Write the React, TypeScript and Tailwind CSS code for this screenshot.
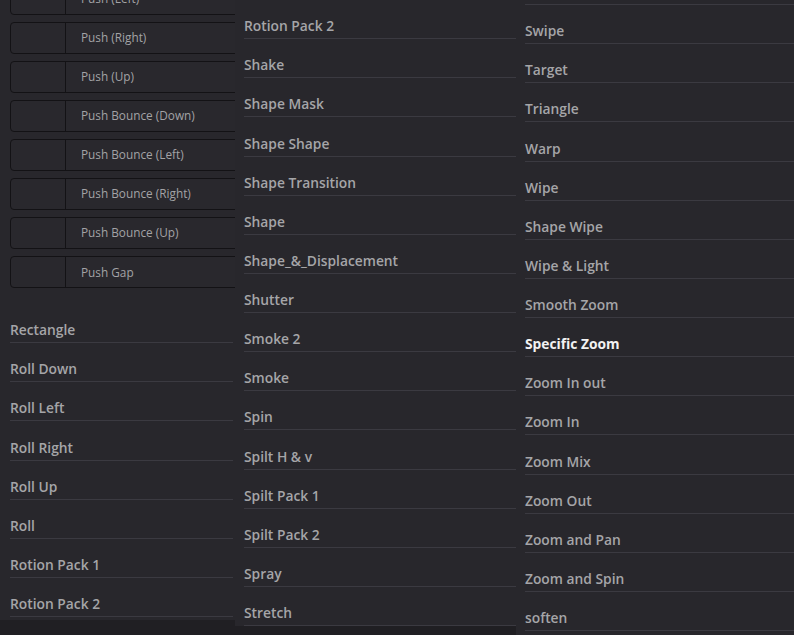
import React from 'react';

const pushItems = [
  'Push (Left)',
  'Push (Right)',
  'Push (Up)',
  'Push Bounce (Down)',
  'Push Bounce (Left)',
  'Push Bounce (Right)',
  'Push Bounce (Up)',
  'Push Gap',
];

const col1 = ['Rectangle', 'Roll Down', 'Roll Left', 'Roll Right', 'Roll Up', 'Roll', 'Rotion Pack 1', 'Rotion Pack 2'];

const col2 = [
  'Rotion Pack 2',
  'Shake',
  'Shape Mask',
  'Shape Shape',
  'Shape Transition',
  'Shape',
  'Shape_&_Displacement',
  'Shutter',
  'Smoke 2',
  'Smoke',
  'Spin',
  'Spilt H & v',
  'Spilt Pack 1',
  'Spilt Pack 2',
  'Spray',
  'Stretch',
];

const col3 = [
  'Swipe',
  'Target',
  'Triangle',
  'Warp',
  'Wipe',
  'Shape Wipe',
  'Wipe & Light',
  'Smooth Zoom',
  'Specific Zoom',
  'Zoom In out',
  'Zoom In',
  'Zoom Mix',
  'Zoom Out',
  'Zoom and Pan',
  'Zoom and Spin',
  'soften',
];

const Item: React.FC<{ name: string; active?: boolean }> = ({ name, active }) => (
  <div className="h-[39.13px] flex items-end border-b border-[#3b3a41]">
    <span
      className={
        'pb-[3px] leading-[18px] text-[13.8px] whitespace-nowrap ' +
        (active ? 'text-[#f2f2f2] font-bold' : 'text-[#a5a5a8] font-semibold')
      }
    >
      {name}
    </span>
  </div>
);

const PushRow: React.FC<{ name: string }> = ({ name }) => (
  <div className="h-[39.13px] flex items-center pl-[10px]">
    <div className="h-[32px] w-[260px] shrink-0 flex rounded-[4px] border-[1.5px] border-[#131215] bg-[#29282d]">
      <div className="w-[55px] h-full border-r-[1.5px] border-[#131215]" />
      <div className="flex items-center pl-[15px] text-[11.8px] text-[#a3a3a6] whitespace-nowrap">{name}</div>
    </div>
  </div>
);

export default function App() {
  return (
    <div
      className="flex w-[794px] h-[635px] overflow-hidden bg-[#28272c]"
      style={{ fontFamily: '"Open Sans", "Noto Sans", sans-serif' }}
    >
      {/* left column */}
      <div className="w-[235px] shrink-0 flex flex-col">
        <div className="h-[620px] overflow-hidden">
          <div className="-mt-[21px]">
            {pushItems.map(p => (
              <PushRow key={p} name={p} />
            ))}
          </div>
          <div className="h-[12px]" />
          <div className="ml-[10px] mr-[2px]">
            {col1.map(n => (
              <Item key={n} name={n} />
            ))}
          </div>
        </div>
        <div className="flex-1 bg-[#201f23]" />
      </div>

      {/* middle column */}
      <div className="w-[281px] shrink-0 flex flex-col">
        <div className="h-[626px] overflow-hidden pl-[9px]">
          {col2.map(n => (
            <Item key={n} name={n} />
          ))}
        </div>
        <div className="flex-1 bg-[#201f23]" />
      </div>

      {/* right column */}
      <div className="flex-1 overflow-hidden pl-[9px]">
        <div className="h-[5px] border-b border-[#3b3a41]" />
        {col3.map(n => (
          <Item key={n} name={n} active={n === 'Specific Zoom'} />
        ))}
      </div>
    </div>
  );
}
